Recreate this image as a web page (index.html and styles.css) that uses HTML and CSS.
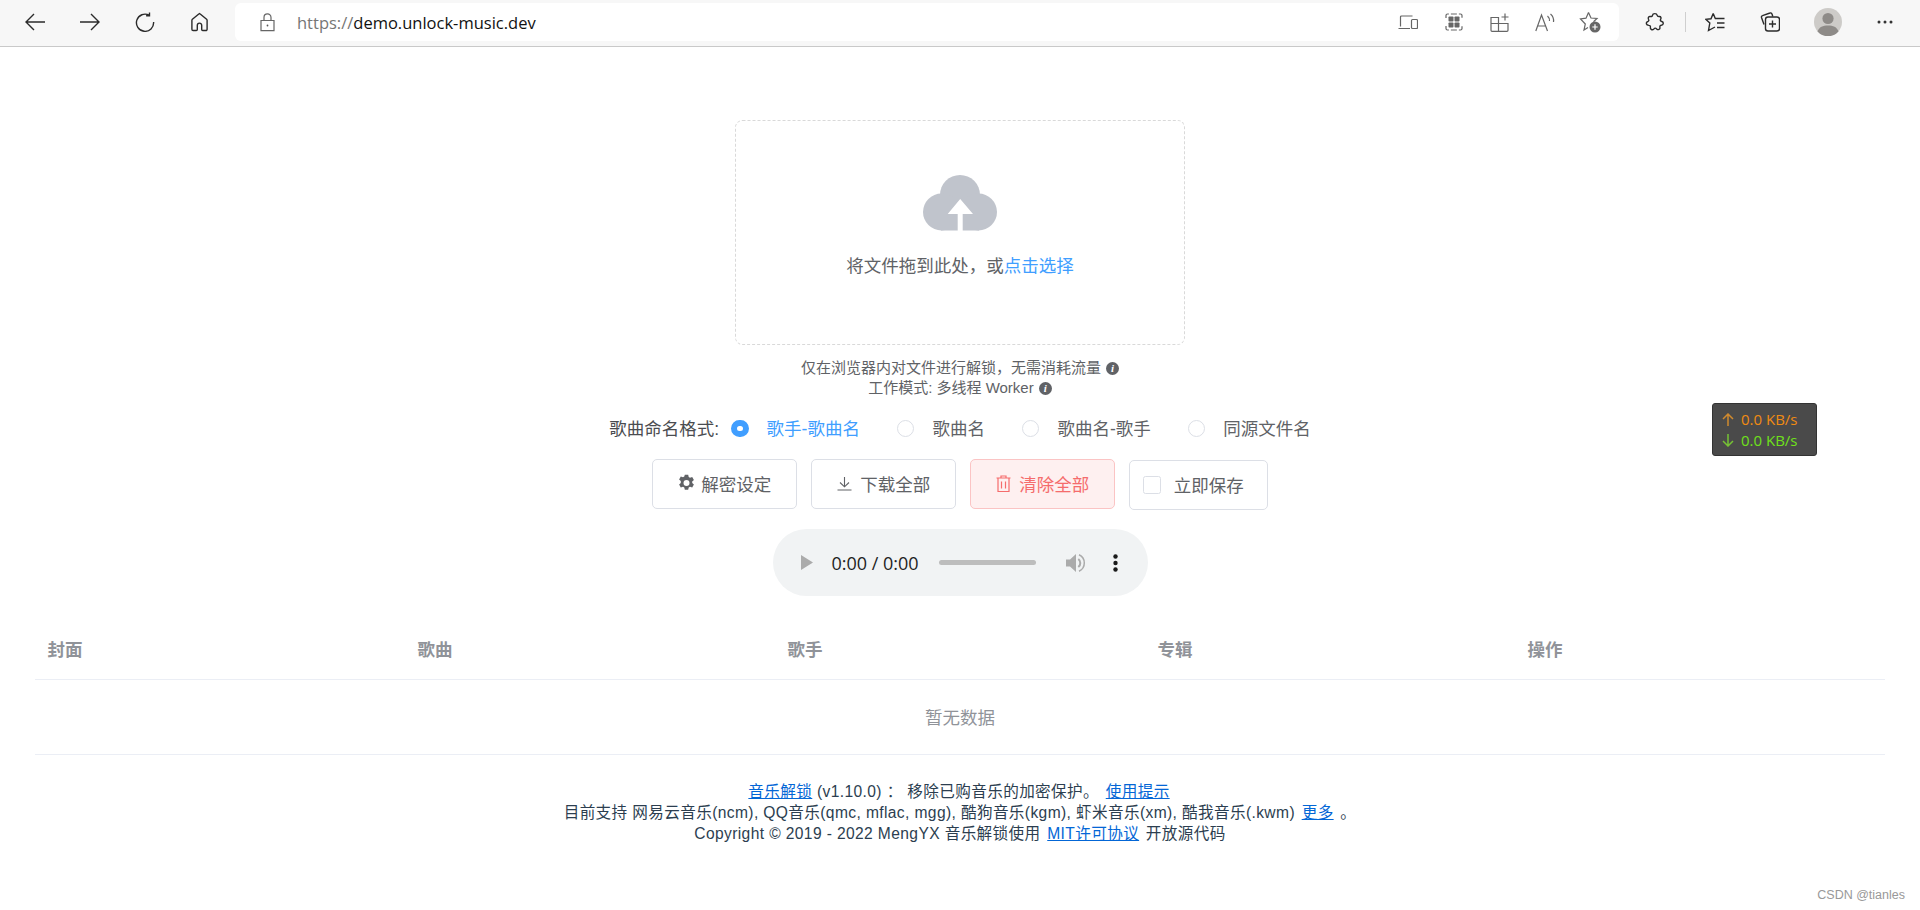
FILE: index.html
```html
<!DOCTYPE html>
<html lang="zh-CN">
<head>
  <meta charset="UTF-8" />
  <meta name="viewport" content="width=device-width, initial-scale=1.0" />
  <title>Unlock Music</title>
  <link rel="stylesheet" href="styles.css">
</head>
<body>

  <header class="toolbar">
    <div class="nav-btn">
      <svg width="22" height="20" viewBox="0 0 22 20" class="ink"><path d="M21 10H2M10 2l-8 8 8 8"/></svg>
    </div>
    <div class="nav-btn">
      <svg width="22" height="20" viewBox="0 0 22 20" class="ink"><path d="M1 10h19M12 2l8 8-8 8"/></svg>
    </div>
    <div class="nav-btn">
      <svg width="20" height="20" viewBox="0 0 20 20" class="ink"><path d="M14.2 3.2A8.6 8.6 0 1 0 18.6 10M14.5 .6v3.2h-3.4"/></svg>
    </div>
    <div class="nav-btn">
      <svg width="20" height="20" viewBox="0 0 20 20" class="ink"><path d="M8.6 1.7 1.9 7.2a1.5 1.5 0 0 0-.5 1.1v9a1.2 1.2 0 0 0 1.2 1.2h3.2a1 1 0 0 0 1-1v-4.2a2.2 2.2 0 0 1 4.4 0v4.2a1 1 0 0 0 1 1h3.2a1.2 1.2 0 0 0 1.2-1.2v-9a1.5 1.5 0 0 0-.5-1.1L9.4 1.7a.6.6 0 0 0-.8 0z" transform="translate(.5 0)"/></svg>
    </div>

    <div class="urlbar">
      <svg class="lock grey" width="15" height="19" viewBox="0 0 15 19"><path d="M1 7.5h13v10.2H1zM4 7.5V4.4a3.5 3.5 0 0 1 7 0v3.1"/><circle cx="7.5" cy="12.5" r=".9" fill="#555" stroke="none"/></svg>
      <div class="url"><span class="url-scheme">https://</span>demo.unlock-music.dev</div>
      <div class="bar-btn">
        <svg width="20" height="15" viewBox="0 0 20 15" class="grey"><path d="M2.5 11.5V2a1 1 0 0 1 1-1h11M.5 13.5h11.5"/><rect x="13.5" y="4.5" width="6" height="9" rx="1"/></svg>
      </div>
      <div class="bar-btn">
        <svg width="18" height="18" viewBox="0 0 18 18" class="grey"><path d="M1 5V2.500A1.500 1.500 0 0 1 2.500 1H15.500A1.500 1.500 0 0 1 17 2.500V5M1 13v2.500A1.500 1.500 0 0 0 2.500 17H15.500A1.500 1.500 0 0 0 17 15.500V13" stroke-dasharray="6 2"/><rect class="solid" x="3.500" y="3.500" width="5" height="5" rx=".8"/><rect class="solid" x="9.500" y="3.500" width="5" height="5" rx=".8"/><rect class="solid" x="3.500" y="9.500" width="5" height="5" rx=".8"/><rect class="solid" x="9.500" y="9.500" width="5" height="5" rx=".8"/></svg>
      </div>
      <div class="bar-btn">
        <svg width="19" height="19" viewBox="0 0 19 19" class="grey"><path d="M1 4.500h7.500v13.800H2a1 1 0 0 1-1-1zM8.500 10.500H18v6.800a1 1 0 0 1-1 1H8.500M1 10.500h7.500M15 .5v7M11.500 4h7"/></svg>
      </div>
      <div class="bar-btn">
        <svg width="20" height="19" viewBox="0 0 20 19" class="grey"><path d="M.8 18 6.500 2 12.500 18M2.700 13h8M12.500 3a6 6 0 0 1 2 5M15.500 1a9 9 0 0 1 3 8"/></svg>
      </div>
      <div class="bar-btn">
        <svg width="22" height="22" viewBox="0 0 22 22" class="grey"><path d="M9.500 1.500 12 7l6 .5-3.500 3.300M9 16.500 5 19l1.300-6-4.800-5L7 7.200 9.500 1.500"/><circle cx="16" cy="16" r="5.500" fill="#666" stroke="none"/><path d="M16 13.300v5.400M13.300 16h5.400" class="plus"/></svg>
      </div>
    </div>

    <div class="nav-btn tool-first">
      <svg width="20" height="20" viewBox="0 0 20 20" class="ink"><path d="M7.500 3.300C7.800 1 11.800 1 12.200 3.300c.2 1 1 1.300 2 1.200 2-.1 2.200 1.600 1.300 3-.5 1 .1 1.700 1.300 2 2.300.8 1.800 3.500-.6 3.800-1 .1-1.600.8-1.300 2 .5 2.200-1.800 3-3.200 1.600-1-1-1.900-1-2.800 0-1.500 1.500-4 .6-3.500-1.600.2-1.200-.4-1.900-1.500-1.900C1 13.300.4 10.300 2.800 9.500c1.100-.4 1.300-1.200.7-2.200C2.700 5.700 3.800 4.100 5.500 4.500c1 .2 1.800-.2 2-1.200z"/></svg>
    </div>
    <div class="tool-sep"></div>
    <div class="nav-btn">
      <svg width="20" height="20" viewBox="0 0 20 20" class="ink"><path d="M8.200 1.500 10.300 6.500H19.500M8.200 1.500 6 6.800l-5.200.5 4 3.700-1.300 7.500 6.500-3.500M12 11h7.500M12 15.500h7.500"/></svg>
    </div>
    <div class="nav-btn">
      <svg width="20" height="20" viewBox="0 0 20 20" class="ink"><path d="M4 12.500 1.500 5.500a1.500 1.500 0 0 1 1-1.900L10 1a1.500 1.500 0 0 1 2 1l.8 2.500"/><rect x="5.500" y="5" width="14" height="14" rx="2.500"/><path d="M12.500 8.500v7M9 12h7"/></svg>
    </div>
    <div class="avatar">
      <svg width="28" height="28" viewBox="0 0 28 28"><circle cx="14" cy="14" r="14" fill="#cdcbc8"/><circle cx="14" cy="10.500" r="5.600" fill="#8e8b88"/><path d="M3.500 23.500C5 19 9 17.500 14 17.500s9 1.500 10.500 6A14 14 0 0 1 3.500 23.500z" fill="#8e8b88"/></svg>
    </div>
    <div class="nav-btn">
      <svg width="16" height="4" viewBox="0 0 16 4"><circle cx="2" cy="2" r="1.500" fill="#333"/><circle cx="8" cy="2" r="1.500" fill="#333"/><circle cx="14" cy="2" r="1.500" fill="#333"/></svg>
    </div>
  </header>

  <main class="page">
    <div class="upload">
      <svg class="upload-icon" width="75" height="56" viewBox="0 0 75 56">
        <circle cx="37" cy="20" r="20" fill="#c0c4cc"/>
        <circle cx="18.500" cy="37" r="18.500" fill="#c0c4cc"/>
        <circle cx="55.500" cy="37" r="18.500" fill="#c0c4cc"/>
        <rect x="18" y="30" width="38" height="25.500" fill="#c0c4cc"/>
        <polygon points="37.200,24 50,39 39.700,39 39.700,56 34.700,56 34.700,39 24.700,39" fill="#fff"/>
      </svg>
      <div class="upload-text">将文件拖到此处，或<em>点击选择</em></div>
    </div>

    <div class="hint">
      <div class="hint-line">仅在浏览器内对文件进行解锁，无需消耗流量 <i class="info">i</i></div>
      <div class="hint-line">工作模式: 多线程 Worker <i class="info">i</i></div>
    </div>

    <div class="naming">
      <span class="naming-label">歌曲命名格式:</span>
      <label class="radio checked"><span class="radio-dot"></span>歌手-歌曲名</label>
      <label class="radio"><span class="radio-dot"></span>歌曲名</label>
      <label class="radio"><span class="radio-dot"></span>歌曲名-歌手</label>
      <label class="radio"><span class="radio-dot"></span>同源文件名</label>
    </div>

    <div class="actions">
      <button class="btn" type="button">
        <svg width="17" height="18" viewBox="0 0 17 18"><path fill="#606266" fill-rule="evenodd" d="M6.800.5h3.400l.5 2.300 1.300.7 2.200-.8 1.700 3-1.700 1.500v1.600l1.700 1.500-1.700 3-2.200-.8-1.300.7-.5 2.300H6.800l-.5-2.300-1.300-.7-2.200.8-1.700-3 1.700-1.500V6.700L1.100 5.200l1.700-3 2.200.8 1.300-.7zM8.500 5.800a3 3 0 1 0 0 6 3 3 0 0 0 0-6z" transform="translate(0 .2)"/></svg>
        解密设定
      </button>
      <button class="btn btn-wide" type="button">
        <svg width="15" height="15" viewBox="0 0 15 15" class="thin"><path d="M7.500 1v9.500M3 6.500l4.500 4.300L12 6.500M.5 14h14"/></svg>
        下载全部
      </button>
      <button class="btn btn-wide btn-danger" type="button">
        <svg width="15" height="17" viewBox="0 0 15 17" class="thin-red"><path d="M.5 3h14M5 3V1h5v2M2 3v13.500h11V3M5.500 6.500v7M9.500 6.500v7"/></svg>
        清除全部
      </button>
      <label class="btn btn-check"><span class="check-box"></span>立即保存</label>
    </div>

    <div class="player">
      <svg width="12" height="15" viewBox="0 0 12 15"><polygon points="0,0 12,7.500 0,15" fill="#ababab"/></svg>
      <span class="player-time">0:00 / 0:00</span>
      <span class="player-bar"></span>
      <svg class="player-vol" width="20" height="20" viewBox="0 0 20 20"><path d="M0 6.500h4L10 1v18l-6-5.500H0z" fill="#ababab"/><path d="M12.300 6a5 5 0 0 1 0 8" stroke="#ababab" stroke-width="2" fill="none"/><path d="M13 1.800a9 9 0 0 1 0 16.400" stroke="#ababab" stroke-width="1.500" fill="none"/></svg>
      <svg class="player-more" width="5" height="18" viewBox="0 0 5 18"><circle cx="2.500" cy="2.500" r="2.200" fill="#1a1a1a"/><circle cx="2.500" cy="9" r="2.200" fill="#1a1a1a"/><circle cx="2.500" cy="15.500" r="2.200" fill="#1a1a1a"/></svg>
    </div>

    <table class="songs">
      <thead>
        <tr><th>封面</th><th>歌曲</th><th>歌手</th><th>专辑</th><th>操作</th></tr>
      </thead>
      <tbody>
        <tr><td colspan="5">暂无数据</td></tr>
      </tbody>
    </table>

    <footer class="foot">
      <div><a href="#">音乐解锁</a> (v1.10.0) ： 移除已购音乐的加密保护。 <a href="#" class="gap">使用提示</a></div>
      <div>目前支持 网易云音乐(ncm), QQ音乐(qmc, mflac, mgg), 酷狗音乐(kgm), 虾米音乐(xm), 酷我音乐(.kwm) <a href="#" class="gap">更多</a> 。</div>
      <div>Copyright © 2019 - 2022 MengYX 音乐解锁使用 <a href="#" class="gap">MIT许可协议</a> 开放源代码</div>
    </footer>
  </main>

  <div class="speed">
    <div class="speed-up"><svg width="12" height="13" viewBox="0 0 12 13"><path d="M6 13V1.500M1 6l5-5 5 5" fill="none" stroke="#d08a2e" stroke-width="1.500"/></svg>0.0 KB/s</div>
    <div class="speed-down"><svg width="12" height="13" viewBox="0 0 12 13"><path d="M6 0v11.500M1 7l5 5 5-5" fill="none" stroke="#76c234" stroke-width="1.500"/></svg>0.0 KB/s</div>
  </div>

  <div class="mark">CSDN @tianles</div>

</body>
</html>
```

FILE: styles.css
```css
* {
  box-sizing: border-box;
}
body {
  margin: 0;
  position: relative;
  height: 910px;
  overflow: hidden;
  background: #fff;
  font-family: "Liberation Sans", "Noto Sans CJK SC", sans-serif;
  color: #606266;
}

/* browser chrome */
.toolbar {
  display: flex;
  align-items: flex-start;
  height: 47px;
  padding: 3px 7.5px 0;
  background: #f7f7f7;
  border-bottom: 1px solid #c9c9c9;
}
.toolbar svg {
  display: block;
}
.ink path, .ink rect {
  fill: none;
  stroke: #2b2b2b;
  stroke-width: 1.4;
}
.grey path, .grey rect {
  fill: none;
  stroke: #666;
  stroke-width: 1.2;
}
.grey rect.solid {
  fill: #666;
  stroke: none;
}
.grey path.plus {
  stroke: #fff;
}
.nav-btn {
  flex: none;
  width: 55px;
  height: 38px;
  display: flex;
  align-items: center;
  justify-content: center;
}
.urlbar {
  flex: 1;
  display: flex;
  align-items: center;
  height: 38px;
  margin-left: 7.5px;
  padding: 0 6px 0 25px;
  background: #fff;
  border-radius: 6px;
}
.lock {
  margin-right: 22px;
}
.url {
  flex: 1;
  font-family: "Open Sans", sans-serif;
  font-size: 16.5px;
  color: #111;
}
.url-scheme {
  color: #767676;
}
.bar-btn {
  width: 45.5px;
  display: flex;
  justify-content: center;
}
.tool-first {
  margin-left: 8.5px;
}
.tool-sep {
  flex: none;
  width: 1px;
  height: 20px;
  margin: 9px 2px 0;
  background: #cfcfcf;
}
.avatar {
  flex: none;
  width: 60px;
  height: 38px;
  display: flex;
  align-items: center;
  justify-content: center;
}

/* page */
.page {
  padding: 73px 35px 0;
  text-align: center;
}
.upload {
  width: 450px;
  height: 225px;
  margin: 0 auto;
  padding-top: 54px;
  border: 1px dashed #d9d9d9;
  border-radius: 7.5px;
}
.upload-icon {
  display: block;
  margin: 0 auto;
}
.upload-text {
  margin-top: 24px;
  font-size: 17.5px;
  line-height: 22px;
}
.upload-text em {
  font-style: normal;
  color: #409eff;
}
.hint {
  margin-top: 13px;
  font-size: 15px;
  line-height: 20px;
}
.info {
  display: inline-block;
  width: 13px;
  height: 13px;
  margin-left: 1px;
  border-radius: 50%;
  background: #606266;
  color: #fff;
  font-family: "Liberation Serif", serif;
  font-size: 11px;
  font-weight: bold;
  line-height: 13px;
  vertical-align: 1px;
}

.naming {
  display: flex;
  justify-content: center;
  align-items: center;
  margin-top: 18px;
  height: 22px;
  font-size: 17.5px;
  color: #606266;
}
.naming-label {
  margin-right: 10px;
  padding-right: 2px;
  color: #4a4c50;
}
.radio {
  display: flex;
  align-items: center;
  margin-right: 37px;
}
.radio:last-child {
  margin-right: 0;
}
.radio-dot {
  width: 17.5px;
  height: 17.5px;
  margin: 3px 18px 0 0;
  border: 1px solid #dcdfe6;
  border-radius: 50%;
  background: #fff;
}
.radio.checked {
  color: #409eff;
}
.radio.checked .radio-dot {
  border: 6px solid #409eff;
}

.actions {
  display: flex;
  justify-content: center;
  align-items: flex-start;
  gap: 14px;
  margin-top: 21px;
}
.btn {
  display: flex;
  align-items: center;
  gap: 6px;
  height: 50px;
  padding: 0 25px 2px;
  background: #fff;
  border: 1px solid #dcdfe6;
  border-radius: 5px;
  color: #606266;
  font-family: inherit;
  font-size: 17.5px;
}
.btn-wide {
  gap: 8px;
}
.thin path {
  fill: none;
  stroke: #606266;
  stroke-width: 1.1;
}
.thin-red path {
  fill: none;
  stroke: #f56c6c;
  stroke-width: 1.2;
}
.btn-danger {
  background: #fef0f0;
  border-color: #fbc4c4;
  color: #f56c6c;
}
.btn-check {
  gap: 13px;
  margin-top: 1px;
  padding-left: 13px;
  padding-right: 23px;
}
.check-box {
  width: 17.5px;
  height: 17.5px;
  margin-top: 2px;
  border: 1px solid #dcdfe6;
  border-radius: 2.5px;
}

.player {
  display: flex;
  align-items: center;
  width: 375px;
  height: 67px;
  margin: 19px auto 0;
  padding-left: 28px;
  background: #f1f3f4;
  border-radius: 34px;
  color: #1f1f1f;
}
.player-time {
  margin-left: 19px;
  font-family: "Open Sans", sans-serif;
  font-size: 18px;
}
.player-bar {
  width: 97px;
  height: 5px;
  margin-left: 20px;
  border-radius: 3px;
  background: #bdbdbd;
}
.player-vol {
  margin-left: 30px;
}
.player-more {
  margin-left: 27px;
}

.songs {
  width: 100%;
  margin-top: 24px;
  border-collapse: collapse;
  table-layout: fixed;
  font-size: 17.5px;
  color: #909399;
}
.songs th {
  height: 59px;
  padding: 0 12.5px 2px;
  text-align: left;
  border-bottom: 1px solid #ebeef5;
}
.songs td {
  height: 75px;
  padding-bottom: 2px;
  text-align: center;
  border-bottom: 1px solid #ebeef5;
}

.foot {
  margin-top: 26px;
  font-size: 15.6px;
  letter-spacing: .38px;
  line-height: 21px;
  color: #2c3e50;
}
.foot a {
  color: #0366d6;
}
.foot .gap {
  margin: 0 2px;
}

/* floating widgets */
.speed {
  position: absolute;
  left: 1712px;
  top: 403px;
  width: 105px;
  height: 53px;
  padding: 5px 0 0 9px;
  background: #4a4a4a;
  border: 1px solid #333;
  border-radius: 3px;
  font-family: "Open Sans", sans-serif;
  font-size: 15px;
  line-height: 21px;
}
.speed div {
  display: flex;
  align-items: center;
  gap: 7px;
}
.speed-up {
  color: #f08a12;
}
.speed-down {
  color: #6fe01a;
}
.mark {
  position: absolute;
  right: 15px;
  bottom: 8px;
  font-size: 12.5px;
  color: #999;
}
```
